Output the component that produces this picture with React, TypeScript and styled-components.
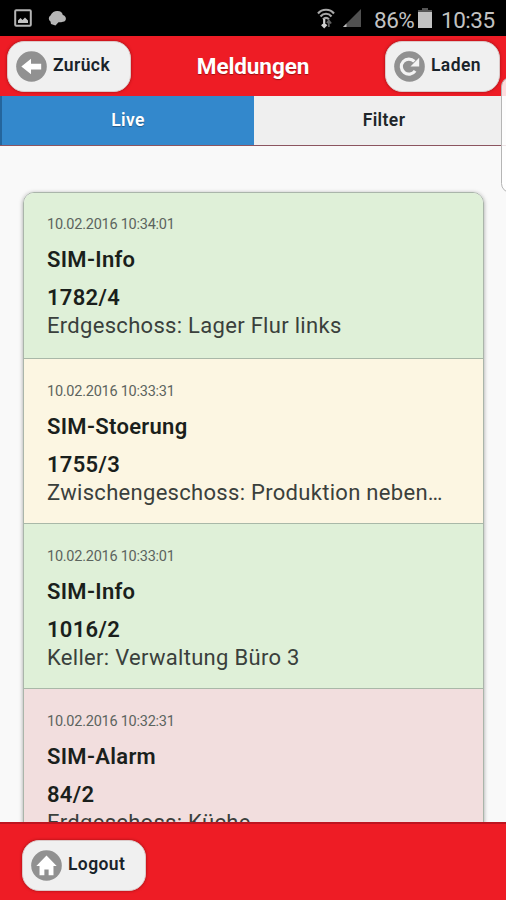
import React from 'react';
import styled, { createGlobalStyle } from 'styled-components';

const GlobalStyle = createGlobalStyle`
  * { box-sizing: border-box; }
  body { margin: 0; background: #f9f9f9; font-family: Roboto, "Liberation Sans", sans-serif; color: #1a1f1c; }
`;

const Screen = styled.div`
  position: relative;
  display: flex;
  flex-direction: column;
  width: 506px;
  height: 900px;
  overflow: hidden;
  background: #f9f9f9;
`;

const StatusBar = styled.div`
  display: flex;
  align-items: center;
  flex: 0 0 36px;
  padding: 0 11px 0 14px;
  background: #000;
  color: #c2c2c2;
`;

const StatusIcon = styled.svg<{ $gap?: number }>`
  display: block;
  flex: none;
  margin-right: ${(p) => p.$gap ?? 0}px;
`;

const Spacer = styled.div`
  flex: 1;
`;

const StatusText = styled.span<{ $gap?: number; $width: number }>`
  width: ${(p) => p.$width}px;
  margin-right: ${(p) => p.$gap ?? 0}px;
  padding-top: 3px;
  font-size: 22.5px;
  line-height: 28px;
  letter-spacing: -0.5px;
  white-space: nowrap;
`;

const Header = styled.header`
  display: grid;
  grid-template-columns: 124px 1fr 115px;
  flex: 0 0 60px;
  padding: 5px 6px 0 7px;
  background: #ee1c25;
`;

const Title = styled.h1`
  margin: 0;
  padding: 9px 10px 0 0;
  text-align: center;
  font-size: 22.5px;
  font-weight: 700;
  line-height: 32px;
  letter-spacing: -0.1px;
  color: #fff;
  text-shadow: 0 1px 1px rgba(90, 0, 0, 0.55);
`;

const PillButton = styled.button<{ $width: number }>`
  display: flex;
  align-items: center;
  width: ${(p) => p.$width}px;
  height: 51px;
  padding: 0 0 0 8px;
  gap: 6px;
  border: 1px solid #dcc9c9;
  border-radius: 17px;
  background: #f0f0f0;
  box-shadow: 0 0 3px rgba(90, 0, 0, 0.55);
  font-family: inherit;
  color: #19232a;
`;

const PillLabel = styled.span<{ $spacing: number }>`
  padding-bottom: 3px;
  font-size: 17.5px;
  font-weight: 600;
  line-height: 22px;
  letter-spacing: ${(p) => p.$spacing}px;
`;

const Tabs = styled.nav`
  display: flex;
  flex: 0 0 50px;
  border-bottom: 1px solid #8c5560;
  background: #efefef;
`;

const Tab = styled.div<{ $active?: boolean }>`
  flex: ${(p) => (p.$active ? '0 0 254px' : '1')};
  padding-top: 13px;
  padding-left: ${(p) => (p.$active ? 0 : 8)}px;
  border-left: ${(p) => (p.$active ? '2px solid #24659c' : '0')};
  text-align: center;
  font-size: 17.5px;
  font-weight: 600;
  line-height: 22px;
  letter-spacing: 0.4px;
  background: ${(p) => (p.$active ? '#3388cc' : '#efefef')};
  color: ${(p) => (p.$active ? '#fff' : '#20262a')};
  text-shadow: ${(p) => (p.$active ? '0 1px 1px #225b8a' : 'none')};
`;

const Content = styled.main`
  flex: 1;
  min-height: 0;
  overflow: hidden;
  padding: 46px 22px 0 23px;
`;

const MessageList = styled.div`
  overflow: hidden;
  height: 760px;
  border: 1px solid #aab5aa;
  border-radius: 11px;
  box-shadow: 0 1px 4px rgba(0, 0, 0, 0.35);
`;

const tones = { info: '#dff0d8', fault: '#fcf6e2', alarm: '#f2dede' };

const Message = styled.article<{ $tone: keyof typeof tones }>`
  height: 165px;
  padding: 23px 36px 0 23px;
  border-bottom: 1px solid #a9b8a8;
  background: ${(p) => tones[p.$tone]};

  &:first-child {
    height: 166px;
    padding-top: 22px;
  }

  &:last-child {
    padding-top: 23px;
  }
`;

const Stamp = styled.div`
  margin-bottom: 10px;
  font-size: 14.5px;
  font-weight: 400;
  line-height: 20px;
  letter-spacing: -0.25px;
  color: #5c645e;
`;

const Strong = styled.div<{ $gap?: number }>`
  margin-bottom: ${(p) => p.$gap ?? 0}px;
  font-size: 22px;
  font-weight: 600;
  line-height: 30px;
  letter-spacing: 0.3px;
`;

const Place = styled.div`
  margin-top: -1px;
  overflow: hidden;
  text-overflow: ellipsis;
  white-space: nowrap;
  font-size: 22px;
  font-weight: 400;
  line-height: 28px;
  letter-spacing: 0.3px;
  color: #3a403c;
`;

const Footer = styled.footer`
  flex: 0 0 78px;
  padding: 16px 0 0 22px;
  border-top: 2px solid #bd1520;
  background: #ee1c25;
`;

const EdgePanel = styled.div`
  position: absolute;
  top: 77px;
  right: -14px;
  width: 19px;
  height: 116px;
  border: 1px solid #b5b5b5;
  border-radius: 12px;
  background: rgba(255, 255, 255, 0.85);
`;

const icons = {
  back: <path d="M5.5 16 15.5 8v5.2H26v5.8H15.5V24Z" fill="#fff" />,
  reload: (
    <>
      <path d="M21.8 20.500a7.800 7.800 0 1 1-.8-9.800" fill="none" stroke="#f4f4f4" strokeWidth="3.300" />
      <path d="M26 7v9H17Z" fill="#f4f4f4" />
    </>
  ),
  home: <path d="M16 5.8 26.5 16.5h-3.3V26h-5v-6h-4.4v6h-5v-9.5H5.5Z" fill="#fff" />,
};

function DiscIcon({ name }: { name: keyof typeof icons }) {
  return (
    <StatusIcon width="31" height="31" viewBox="0 0 32 32">
      <circle cx="16" cy="16" r="15.8" fill="#919191" />
      {icons[name]}
    </StatusIcon>
  );
}

const messages: { at: string; kind: string; code: string; place: string; tone: keyof typeof tones }[] = [
  { at: '10.02.2016 10:34:01', kind: 'SIM-Info', code: '1782/4', place: 'Erdgeschoss: Lager Flur links', tone: 'info' },
  { at: '10.02.2016 10:33:31', kind: 'SIM-Stoerung', code: '1755/3', place: 'Zwischengeschoss: Produktion neben …', tone: 'fault' },
  { at: '10.02.2016 10:33:01', kind: 'SIM-Info', code: '1016/2', place: 'Keller: Verwaltung Büro 3', tone: 'info' },
  { at: '10.02.2016 10:32:31', kind: 'SIM-Alarm', code: '84/2', place: 'Erdgeschoss: Küche', tone: 'alarm' },
];

export default function App() {
  return (
    <Screen>
      <GlobalStyle />
      <StatusBar>
        <StatusIcon width="18" height="18" viewBox="0 0 18 18" $gap={15}>
          <rect x="1.2" y="1.2" width="15.6" height="15.6" rx="1" fill="none" stroke="#b5b5b5" strokeWidth="2" />
          <path d="M4 14v-2.5L6.5 9l2 2L11 8.500l3 3V14Z" fill="#c4c4c4" />
        </StatusIcon>
        <StatusIcon width="20" height="16" viewBox="0 0 20 16">
          <path d="M3.500 11.500a3.500 3.500 0 0 1 0-6C5 2.200 8 .8 10.500 1c3 0 4.800 1.600 5.300 4 4 1 4.200 6.300.2 6.700-1.500.3-3 .8-4.500.6L8.500 15.500 4 14Z" fill="#b5b5b5" />
        </StatusIcon>
        <Spacer />
        <StatusIcon width="18" height="21" viewBox="0 0 18 21" $gap={7}>
          <path d="M1 5.500c4-5 12-5 16 0M3.500 8.500c3-3.600 8-3.600 11 0M6 11.400c1.800-2 4.200-2 6 0" fill="none" stroke="#a8a8a8" strokeWidth="2.100" />
          <path d="M7.200 11v8M4.900 16.500l2.300 2.500 2.300-2.500" fill="none" stroke="#d0d0d0" strokeWidth="2.200" />
          <path d="M11.800 19v-6M9.900 15l1.900-2.500 2.300 3" fill="none" stroke="#626262" strokeWidth="1.800" />
        </StatusIcon>
        <StatusIcon width="20" height="20" viewBox="0 0 20 20" $gap={12}>
          <path d="M19 1v18H1Z" fill="#505050" />
          <path d="M4.500 15.500V19H1Z" fill="#c2c2c2" />
        </StatusIcon>
        <StatusText $width={43} $gap={1}>86%</StatusText>
        <StatusIcon width="14" height="20" viewBox="0 0 14 20" $gap={9}>
          <path d="M4 0h6v2h4v2H0V2h4Z" fill="#555" />
          <path d="M0 4h14v16H0Z" fill="#c2c2c2" />
        </StatusIcon>
        <StatusText $width={54}>10:35</StatusText>
      </StatusBar>
      <Header>
        <PillButton $width={124}>
          <DiscIcon name="back" />
          <PillLabel $spacing={0.4}>Zurück</PillLabel>
        </PillButton>
        <Title>Meldungen</Title>
        <PillButton $width={115}>
          <DiscIcon name="reload" />
          <PillLabel $spacing={0.4}>Laden</PillLabel>
        </PillButton>
      </Header>
      <Tabs>
        <Tab $active>Live</Tab>
        <Tab>Filter</Tab>
      </Tabs>
      <Content>
        <MessageList>
          {messages.map((m) => (
            <Message key={m.at} $tone={m.tone}>
              <Stamp>{m.at}</Stamp>
              <Strong $gap={8}>{m.kind}</Strong>
              <Strong>{m.code}</Strong>
              <Place>{m.place}</Place>
            </Message>
          ))}
        </MessageList>
      </Content>
      <Footer>
        <PillButton $width={124}>
          <DiscIcon name="home" />
          <PillLabel $spacing={0.4}>Logout</PillLabel>
        </PillButton>
      </Footer>
      <EdgePanel />
    </Screen>
  );
}
